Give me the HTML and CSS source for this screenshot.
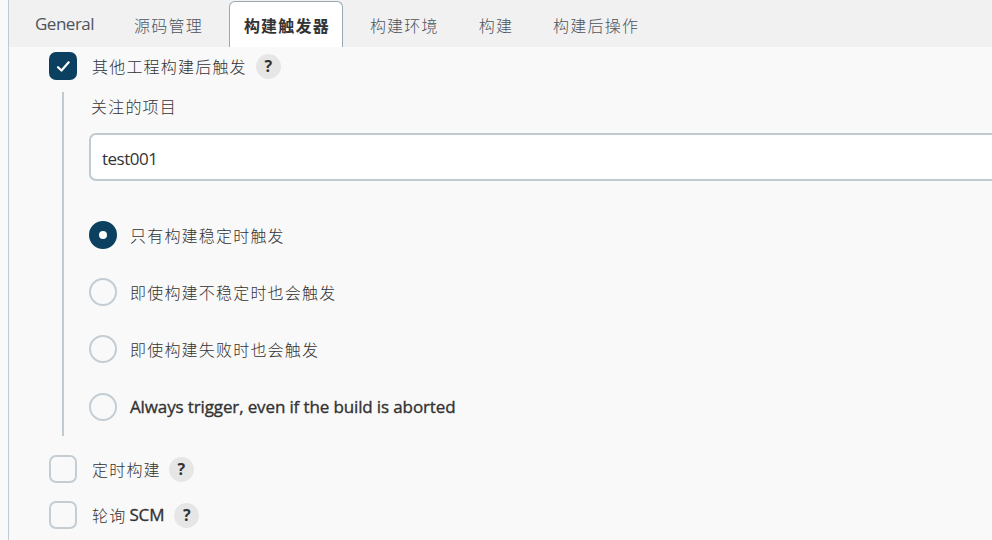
FILE: index.html
```html
<!DOCTYPE html>
<html lang="zh-CN">
<head>
<meta charset="utf-8">
<title>构建触发器</title>
<link rel="stylesheet" href="styles.css">
</head>
<body>
<main class="panel">
  <nav class="tabs">
    <a class="tab general">General</a>
    <a class="tab cjk">源码管理</a>
    <a class="tab cjk active">构建触发器</a>
    <a class="tab cjk">构建环境</a>
    <a class="tab cjk">构建</a>
    <a class="tab cjk">构建后操作</a>
  </nav>
  <form class="form">
    <div class="row first">
      <span class="box checked"><svg width="28" height="28" viewBox="0 0 28 28"><path d="M9 15.2l3.5 3.3 7.2-8.2" fill="none" stroke="#fff" stroke-width="2.2" stroke-linecap="round" stroke-linejoin="round"/></svg></span>
      <span class="label cjk">其他工程构建后触发</span>
      <span class="help">?</span>
    </div>
    <section class="nested">
      <div class="field-title cjk">关注的项目</div>
      <div class="input">test001</div>
      <div class="options">
        <div class="option"><span class="radio selected"></span><span class="label cjk">只有构建稳定时触发</span></div>
        <div class="option"><span class="radio"></span><span class="label cjk">即使构建不稳定时也会触发</span></div>
        <div class="option"><span class="radio"></span><span class="label cjk">即使构建失败时也会触发</span></div>
        <div class="option"><span class="radio"></span><span class="label latin always">Always trigger, even if the build is aborted</span></div>
      </div>
    </section>
    <div class="row timer">
      <span class="box"></span>
      <span class="label cjk">定时构建</span>
      <span class="help">?</span>
    </div>
    <div class="row poll">
      <span class="box"></span>
      <span class="label cjk">轮询</span><span class="latin scm">SCM</span>
      <span class="help">?</span>
    </div>
  </form>
</main>
</body>
</html>
```
FILE: styles.css
```css
* { box-sizing: border-box; }
body {
  margin: 0;
  height: 540px;
  overflow: hidden;
  background: #f9f9f9;
  color: #333;
  font: 17px/24px "Open Sans", "Noto Sans CJK SC", sans-serif;
}
.panel {
  height: 540px;
  margin-left: 8px;
  border-left: 1px solid #bfcbd1;
}
.cjk {
  font-family: "Noto Sans CJK SC", sans-serif;
  font-size: 16px;
  font-weight: 300;
  letter-spacing: 1.2px;
  white-space: nowrap;
}
.tabs {
  display: flex;
  height: 47px;
  padding: 1px 0 0 11px;
  background: #f1f1f1;
}
.tab {
  height: 46px;
  padding: 11px 12px 0 13px;
  border: 1px solid transparent;
  border-bottom: 0;
  color: #4d545d;
  margin-right: 13px;
}
.tab.general {
  padding-top: 10px;
  padding-left: 14px;
  font-size: 17px;
  letter-spacing: -.5px;
}
.tab.active {
  width: 114px;
  padding-left: 14px;
  padding-right: 0;
  border-color: #98a9b3;
  border-radius: 6px 6px 0 0;
  background: #fff;
  color: #333;
  font-weight: 700;
}
.form { padding-left: 40px; }
.row {
  display: flex;
  align-items: center;
  height: 28px;
}
.first { margin-top: 5px; }
.box {
  flex: none;
  width: 28px;
  height: 28px;
  border: 2px solid #c3cdd3;
  border-radius: 7px;
  margin-right: 15px;
}
.checked {
  border: 0;
  background: #0b4060;
}
.checked svg { display: block; }
.help {
  flex: none;
  width: 25px;
  height: 25px;
  margin-left: 9px;
  border-radius: 50%;
  background: #e6e6e6;
  font-size: 16px;
  font-weight: 700;
  line-height: 25px;
  text-align: center;
}
.nested {
  height: 344px;
  margin: 12px 0 0 13px;
  padding-left: 25px;
  border-left: 2px solid #bfcbd0;
}
.field-title {
  height: 41px;
  padding: 2px 0 0 2px;
}
.input {
  height: 48px;
  padding: 12px 11px 0;
  border: 2px solid #bfcbd0;
  border-right: 0;
  border-radius: 7px 0 0 7px;
  background: #fff;
  line-height: 24px;
  letter-spacing: -.5px;
}
.options {
  display: grid;
  gap: 29.4px;
  padding-top: 39.5px;
}
.option {
  display: flex;
  align-items: center;
  height: 28px;
}
.radio {
  flex: none;
  width: 28px;
  height: 28px;
  border: 2px solid #c3cdd3;
  border-radius: 50%;
  margin-right: 13px;
}
.selected {
  border: 10px solid #0b4060;
  background: #fff;
}
.latin {
  font-family: "Open Sans", sans-serif;
  font-size: 17px;
  letter-spacing: -.13px;
  -webkit-text-stroke: .35px #333;
  white-space: nowrap;
}
.timer { margin-top: 19px; }
.timer .help { margin-left: 8px; }
.poll { margin-top: 18px; }
.scm { margin-left: 3px; }
.poll .help { margin-left: 10px; }
```
